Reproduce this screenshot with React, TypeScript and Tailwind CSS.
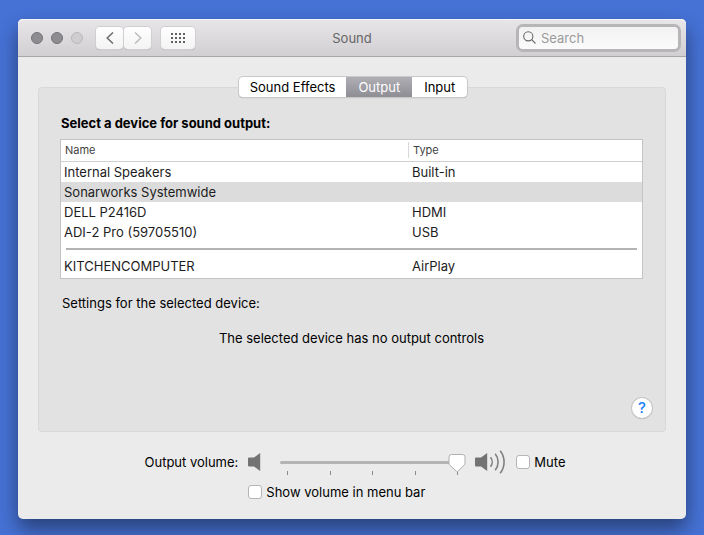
import React, { useState } from 'react';
import clsx from 'clsx';

interface Device {
  id: string;
  name: string;
  type: string;
}

const localDevices: Device[] = [
  { id: 'internal', name: 'Internal Speakers', type: 'Built-in' },
  { id: 'sonarworks', name: 'Sonarworks Systemwide', type: '' },
  { id: 'dell', name: 'DELL P2416D', type: 'HDMI' },
  { id: 'adi', name: 'ADI-2 Pro (59705510)', type: 'USB' },
];

const airplayDevices: Device[] = [{ id: 'kitchen', name: 'KITCHENCOMPUTER', type: 'AirPlay' }];

const tabs = ['Sound Effects', 'Output', 'Input'];

const toolbarButton =
  'flex h-[22px] items-center justify-center rounded bg-linear-to-b from-white to-[#f3f3f3] shadow-[0_0_0_1px_#d0ced0,0_1px_1px_#a5a3a5]';

function TitleBar() {
  return (
    <header className="grid h-[38px] grid-cols-[1fr_auto_1fr] items-center rounded-t-[5px] border-b border-[#a9a7a9] bg-linear-to-b from-[#e8e6e8] to-[#d1cfd1] px-2 shadow-[inset_0_1px_0_#f5f4f5]">
      <div className="flex items-center pl-[5px]">
        <div className="flex gap-2">
          <button aria-label="Close" className="size-3 rounded-full border border-[#737276] bg-[#8d8c91]" />
          <button aria-label="Minimize" className="size-3 rounded-full border border-[#737276] bg-[#8d8c91]" />
          <button aria-label="Zoom" disabled className="size-3 rounded-full border border-[#bab8ba] bg-[#cfcdcf]" />
        </div>
        <div className="ml-[13px] flex gap-px">
          <button aria-label="Back" className={clsx(toolbarButton, 'w-[27px]')}>
            <svg width="8" height="12" viewBox="0 0 8 12" fill="none" stroke="#6b6b6b" strokeWidth="1.5">
              <path d="M7 .5 1.2 6 7 11.5" />
            </svg>
          </button>
          <button aria-label="Forward" disabled className={clsx(toolbarButton, 'w-[27px]')}>
            <svg width="8" height="12" viewBox="0 0 8 12" fill="none" stroke="#bcbcbc" strokeWidth="1.5">
              <path d="M1 .5 6.8 6 1 11.5" />
            </svg>
          </button>
        </div>
        <button aria-label="Show All" className={clsx(toolbarButton, 'ml-[10px] w-[34px]')}>
          <svg width="14" height="10" viewBox="0 0 14 10" fill="#5f5f5f">
            {[0, 4, 8].map((y) => [0, 4, 8, 12].map((x) => <rect key={`${x}-${y}`} x={x} y={y} width="2" height="2" />))}
          </svg>
        </button>
      </div>
      <h1 className="text-[13px] text-[#666566]">Sound</h1>
      <label className="flex h-[22px] w-[159px] items-center justify-self-end rounded bg-linear-to-b from-[#f2f2f2] to-[#fbfbfb] pl-1 shadow-[0_0_0_3px_#b7b5b8]">
        <svg width="13" height="13" viewBox="0 0 13 13" fill="none" stroke="#69686a" strokeWidth="1.1" className="shrink-0">
          <circle cx="5.3" cy="5.3" r="4.6" />
          <path d="m8.7 8.7 3.8 3.8" />
        </svg>
        <input
          type="search"
          aria-label="Search"
          placeholder="Search"
          className="ml-[5px] min-w-0 flex-1 bg-transparent text-[13px] outline-none placeholder:text-[#9b9a9b]"
        />
      </label>
    </header>
  );
}

function DeviceTable() {
  const [selected, setSelected] = useState('sonarworks');

  const renderRow = (device: Device) => (
    <tr
      key={device.id}
      aria-selected={selected === device.id}
      onClick={() => setSelected(device.id)}
      className={clsx('h-5', selected === device.id && 'bg-[#dcdcdc]')}
    >
      <td className="p-0 pl-[3px]">{device.name}</td>
      <td className="p-0 pl-1">{device.type}</td>
    </tr>
  );

  return (
    <div className="mt-1.5 border border-[#c4c4c4] bg-white pb-0.5">
      <table className="w-full table-fixed border-collapse text-[13px] leading-5 text-[#1d1d1d]">
        <thead>
          <tr className="h-[21px] border-b border-[#d0d0d0] text-left text-[11px] text-[#3f3f3f]">
            <th className="w-[347px] p-0 pl-1 font-normal">Name</th>
            <th className="p-0 font-normal">
              <div className="border-l border-[#d8d8d8] pl-1 leading-4">Type</div>
            </th>
          </tr>
        </thead>
        <tbody>{localDevices.map(renderRow)}</tbody>
        <tbody>
          <tr className="h-[14px]">
            <td colSpan={2} className="p-0 px-[5px]">
              <hr className="border-t-2 border-[#b3b3b3]" />
            </td>
          </tr>
          {airplayDevices.map(renderRow)}
        </tbody>
      </table>
    </div>
  );
}

function VolumeSlider() {
  const [volume, setVolume] = useState(100);

  return (
    <div className="relative flex h-5 w-[185px] flex-col pt-[9px]">
      <div className="h-[3px] shrink-0 rounded-full bg-[#b4b4b4]" />
      <div className="mx-[7px] mt-[7px] flex shrink-0 justify-between">
        {[0, 25, 50, 75, 100].map((tick) => (
          <span key={tick} className="h-1 w-px bg-[#8a8a8a]" />
        ))}
      </div>
      <div className="absolute inset-x-2 top-0.5">
        <svg
          width="18"
          height="20"
          viewBox="0 0 18 20"
          className="relative -translate-x-1/2"
          style={{ left: `${volume}%` }}
        >
          <path
            d="M3.5.5h11a2.5 2.5 0 0 1 2.5 2.5v6.2c0 .8-.3 1.4-.8 2l-6.6 6.2a.9.9 0 0 1-1.2 0l-6.6-6.2c-.5-.6-.8-1.2-.8-2V3A2.5 2.5 0 0 1 3.5.5Z"
            fill="#fff"
            stroke="#b0b0b0"
          />
        </svg>
      </div>
      <input
        id="volume"
        type="range"
        min="0"
        max="100"
        value={volume}
        onChange={(e) => setVolume(Number(e.target.value))}
        className="absolute inset-0 w-full opacity-0"
      />
    </div>
  );
}

function Checkbox({ label }: { label: string }) {
  return (
    <label className="flex items-center gap-1">
      <input
        type="checkbox"
        className="size-[14px] appearance-none rounded-[3px] border border-[#b5b5b5] bg-white checked:bg-[#3b8cf7]"
      />
      {label}
    </label>
  );
}

export default function App() {
  const [activeTab, setActiveTab] = useState('Output');

  return (
    <div className="flex min-h-screen flex-col bg-[#4672d6] px-[18px] pt-[19px] pb-4 font-[Inter,'Liberation_Sans',sans-serif] text-[13px] leading-5 text-black">
      <div className="flex flex-1 flex-col rounded-[5px] bg-[#ebebeb] shadow-[0_10px_20px_rgba(0,0,0,0.45)]">
        <TitleBar />
        <main className="flex flex-1 flex-col px-5 pt-5 pb-[17px]">
          <div role="tablist" className="z-10 ml-0.5 flex h-5 self-center rounded bg-white shadow-[0_0_0_1px_#c9c9c9,0_1px_1px_#999]">
            {tabs.map((tab) => (
              <button
                key={tab}
                role="tab"
                aria-selected={activeTab === tab}
                onClick={() => setActiveTab(tab)}
                className={clsx(
                  'px-3 first:rounded-l first:px-[11px] last:rounded-r',
                  activeTab === tab && 'bg-linear-to-b from-[#b0afb5] to-[#8e8d94] text-white'
                )}
              >
                {tab}
              </button>
            ))}
          </div>

          <section className="-mt-[10px] flex flex-1 flex-col rounded border border-[#d8d8d8] bg-[#e2e2e2] pt-[25px] pr-[22px] pb-[13px] pl-[21px]">
            <h2 className="pl-px font-bold">Select a device for sound output:</h2>
            <DeviceTable />
            <p className="mt-[14px] pl-0.5">Settings for the selected device:</p>
            <p className="mt-[15px] text-center">The selected device has no output controls</p>
            <button
              aria-label="Help"
              className="mt-auto -mr-[9px] size-5 self-end rounded-full bg-white text-[15px] font-medium text-[#1a82fb] shadow-[0_0_0_1px_#c6c6c6,0_1px_1px_#999]"
            >
              ?
            </button>
          </section>

          <div className="mt-5 grid grid-cols-[auto_auto] justify-center gap-[10px] pl-1.5">
            <label htmlFor="volume">Output volume:</label>
            <div className="flex h-5 items-center">
              <svg width="13" height="18" viewBox="0 0 13 18" fill="#737373">
                <path d="M1 4.5h5L12.2 0v18L6 13.5H1a1 1 0 0 1-1-1v-7a1 1 0 0 1 1-1Z" />
              </svg>
              <div className="ml-[19px]">
                <VolumeSlider />
              </div>
              <svg width="32" height="24" viewBox="0 0 32 24" fill="none" stroke="#808080" strokeWidth="1.6" className="mr-[9px] ml-[10px]">
                <path d="M1 7.5h5L12.2 3v18L6 16.5H1a1 1 0 0 1-1-1v-7a1 1 0 0 1 1-1Z" fill="#737373" stroke="none" />
                <path d="M15.5 7.3a7.4 7.4 0 0 1 0 9.4M20.2 3.8a13 13 0 0 1 0 16.4M25.2.7a18.4 18.4 0 0 1 0 22.6" />
              </svg>
              <Checkbox label="Mute" />
            </div>
            <div className="col-start-2">
              <Checkbox label="Show volume in menu bar" />
            </div>
          </div>
        </main>
      </div>
    </div>
  );
}
